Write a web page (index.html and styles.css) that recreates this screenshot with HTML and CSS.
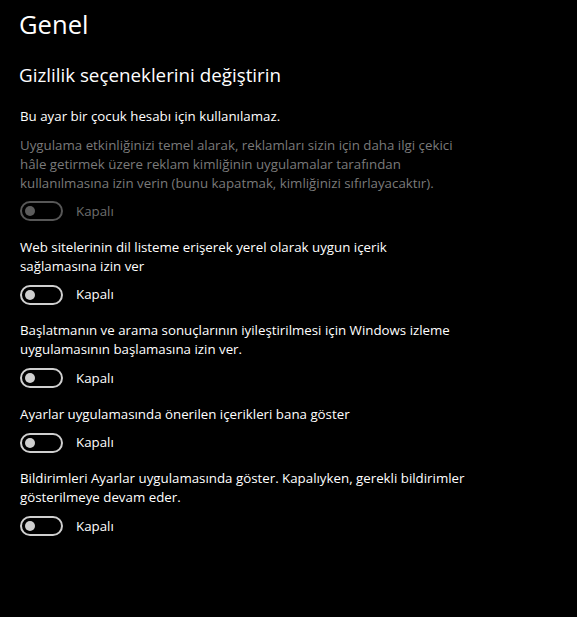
FILE: index.html
```html
<!DOCTYPE html>
<html lang="tr">
<head>
<meta charset="utf-8">
<title>Genel</title>
<link rel="stylesheet" href="styles.css">
</head>
<body>
<main class="page">
  <h1 class="title">Genel</h1>
  <h2 class="subtitle">Gizlilik seçeneklerini değiştirin</h2>
  <p class="notice">Bu ayar bir çocuk hesabı için kullanılamaz.</p>

  <section class="setting setting--disabled setting--first">
    <p class="setting-text">Uygulama etkinliğinizi temel alarak, reklamları sizin için daha ilgi çekici<br>hâle getirmek üzere reklam kimliğinin uygulamalar tarafından<br>kullanılmasına izin verin (bunu kapatmak, kimliğinizi sıfırlayacaktır).</p>
    <div class="toggle-row">
      <span class="toggle"><span class="knob"></span></span>
      <span class="toggle-label">Kapalı</span>
    </div>
  </section>

  <section class="setting">
    <p class="setting-text">Web sitelerinin dil listeme erişerek yerel olarak uygun içerik<br>sağlamasına izin ver</p>
    <div class="toggle-row">
      <span class="toggle"><span class="knob"></span></span>
      <span class="toggle-label">Kapalı</span>
    </div>
  </section>

  <section class="setting">
    <p class="setting-text">Başlatmanın ve arama sonuçlarının iyileştirilmesi için Windows izleme<br>uygulamasının başlamasına izin ver.</p>
    <div class="toggle-row">
      <span class="toggle"><span class="knob"></span></span>
      <span class="toggle-label">Kapalı</span>
    </div>
  </section>

  <section class="setting">
    <p class="setting-text">Ayarlar uygulamasında önerilen içerikleri bana göster</p>
    <div class="toggle-row">
      <span class="toggle"><span class="knob"></span></span>
      <span class="toggle-label">Kapalı</span>
    </div>
  </section>

  <section class="setting">
    <p class="setting-text">Bildirimleri Ayarlar uygulamasında göster. Kapalıyken, gerekli bildirimler<br>gösterilmeye devam eder.</p>
    <div class="toggle-row">
      <span class="toggle"><span class="knob"></span></span>
      <span class="toggle-label">Kapalı</span>
    </div>
  </section>
</main>
</body>
</html>
```

FILE: styles.css
```css
html, body {
  margin: 0;
  padding: 0;
  background: #000;
}

body {
  color: #fff;
  font-family: "Open Sans", "Noto Sans", "DejaVu Sans", sans-serif;
  font-size: 13.3px;
  line-height: 19px;
  width: 577px;
  height: 617px;
  overflow: hidden;
}

.page {
  padding: 7px 0 0 19px;
}

.title {
  margin: 0;
  font-size: 25.6px;
  line-height: 36px;
  font-weight: 400;
}

.subtitle {
  margin: 19px 0 0 0;
  font-size: 18.8px;
  line-height: 26px;
  font-weight: 400;
}

.notice {
  margin: 19px 0 0 1px;
}

.setting {
  margin-top: 16.5px;
}

.setting--first {
  margin-top: 10px;
}

.setting-text {
  margin: 0 0 0 1px;
}

.setting--disabled .setting-text {
  color: #7a7a7a;
}

.toggle-row {
  display: flex;
  align-items: center;
  height: 20px;
  margin-top: 9px;
}

.setting--first .toggle-row {
  margin-top: 8px;
}

.toggle {
  box-sizing: border-box;
  width: 43px;
  height: 20px;
  margin-left: 1px;
  border: 2px solid #cfcfcf;
  border-radius: 10px;
  display: flex;
  align-items: center;
  padding-left: 3px;
}

.knob {
  width: 10px;
  height: 10px;
  border-radius: 50%;
  background: #cfcfcf;
}

.toggle-label {
  margin-left: 13px;
  color: #fff;
}

.setting--disabled .toggle {
  border-color: #575757;
}

.setting--disabled .knob {
  background: #5c5c5c;
}

.setting--disabled .toggle-label {
  color: #6e6e6e;
}
```
